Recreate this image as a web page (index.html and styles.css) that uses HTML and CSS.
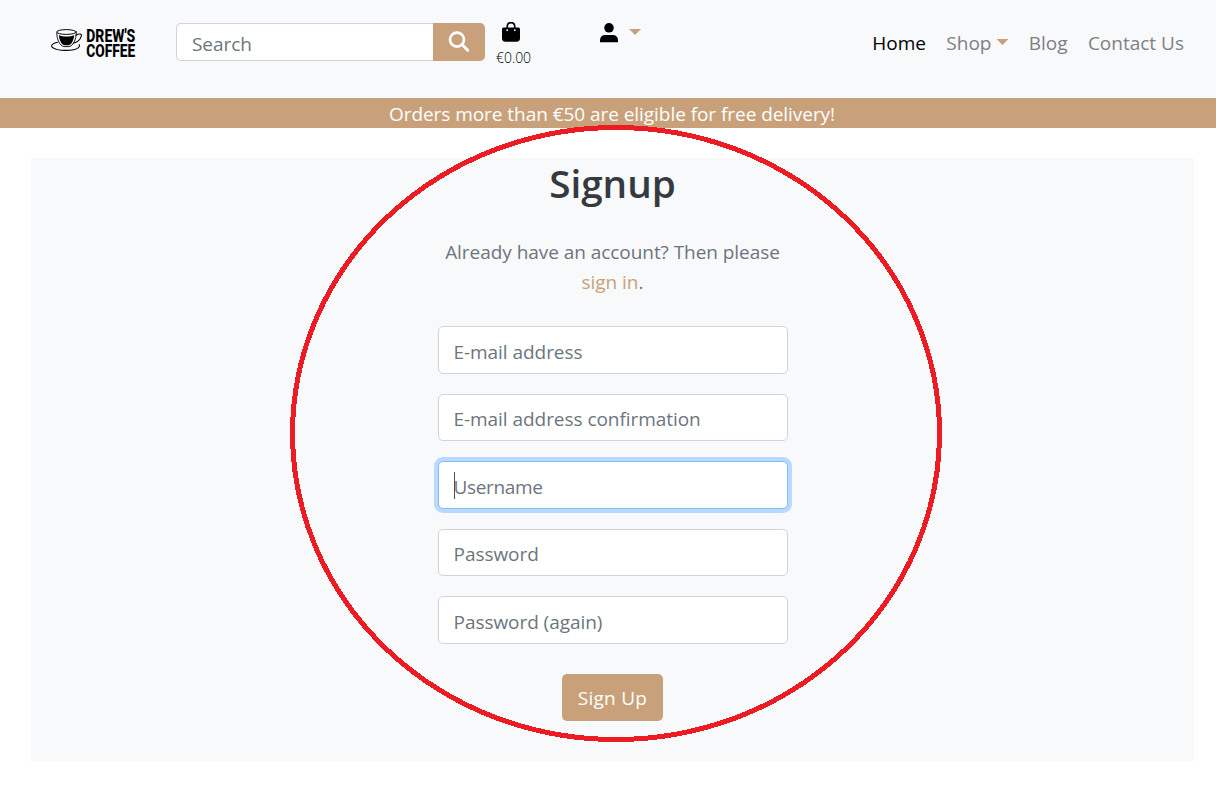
FILE: index.html
```
<!DOCTYPE html>
<html lang="en">
<head>
<meta charset="utf-8">
<title>Drew's Coffee - Signup</title>
<link rel="stylesheet" href="styles.css">
</head>
<body>
<header class="header">
  <a class="brand">
    <svg width="90" height="34" viewBox="0 0 90 34">
      <g fill="none" stroke="#000" stroke-linecap="round">
        <ellipse cx="16.5" cy="6" rx="9.8" ry="2.4" stroke-width="1"/>
        <path d="M6.7 7C7 13.5 9.5 19.7 14 20.6H19C23.5 19.7 26 13.5 26.3 7" stroke-width=".9"/>
        <path d="M26 9.2C28.5 7.8 32.5 7.2 31.2 10.4C30 14.2 26.5 16.6 23.3 17.2" stroke-width="1.1"/>
        <path d="M7.5 16.2C2.5 17.2 0 19.5 2.8 21.7C7 25.2 24 25.4 28.5 21.6C29.7 20.4 29.9 19.5 29.2 18.7" stroke-width="1.1"/>
      </g>
      <path d="M8.8 9.2C12.5 11 20.5 11 24.2 9.2C23.6 14.5 21.5 18.6 18.7 19.2H14.5C11.5 18.6 9.5 14.5 8.8 9.2Z"/>
      <text class="logo-text" x="36.3" y="15.7" textLength="49" lengthAdjust="spacingAndGlyphs">DREW'S</text>
      <text class="logo-text" x="36.3" y="31" textLength="49" lengthAdjust="spacingAndGlyphs">COFFEE</text>
    </svg>
  </a>
  <form class="search">
    <input class="search-input" type="text" placeholder="Search">
    <button class="search-btn" type="button" aria-label="Search">
      <svg width="22" height="22" viewBox="0 0 22 22" fill="none" stroke="#fff" stroke-linecap="round"><circle cx="9" cy="8.6" r="7" stroke-width="2.7"/><path d="M14.2 13.8L19.7 19.3" stroke-width="3"/></svg>
    </button>
  </form>
  <a class="bag">
    <svg width="18" height="20" viewBox="0 0 18 20"><path d="M5.2 8V5C5.2 -.8 12.8 -.8 12.8 5V8" fill="none" stroke="#000" stroke-width="1.6"/><path d="M1.5 5.5H16.5Q18 5.5 18 7V16.3Q18 19.7 14.6 19.7H3.4Q0 19.7 0 16.3V7Q0 5.5 1.5 5.5Z"/><circle cx="5.2" cy="8.2" r=".9" fill="#f8f9fb"/><circle cx="12.8" cy="8.2" r=".9" fill="#f8f9fb"/></svg>
    <span class="price">€0.00</span>
  </a>
  <a class="account">
    <svg width="18" height="20" viewBox="0 0 18 20"><circle cx="9" cy="4.8" r="4.8"/><path d="M0 19.2V17.5Q0 12 5.5 12H12.5Q18 12 18 17.5V19.2Z"/></svg>
    <i class="caret"></i>
  </a>
  <nav class="nav">
    <a class="active">Home</a>
    <a>Shop<i class="caret"></i></a>
    <a>Blog</a>
    <a>Contact Us</a>
  </nav>
</header>
<div class="banner">Orders more than €50 are eligible for free delivery!</div>
<main class="card">
  <h1>Signup</h1>
  <p class="intro">Already have an account? Then please <a>sign in</a>.</p>
  <form class="form">
    <input class="field" type="text" placeholder="E-mail address">
    <input class="field" type="text" placeholder="E-mail address confirmation">
    <div class="focused"><input class="field" type="text" placeholder="Username"><span class="cursor"></span></div>
    <input class="field" type="text" placeholder="Password">
    <input class="field" type="text" placeholder="Password (again)">
    <button class="submit" type="button">Sign Up</button>
  </form>
</main>
<svg class="highlight" width="652" height="617" viewBox="0 0 652 617" shape-rendering="crispEdges"><ellipse cx="326" cy="308.5" rx="323.5" ry="306" fill="none" stroke="#ed1c24" stroke-width="5"/></svg>
</body>
</html>
```
FILE: styles.css
```
* { box-sizing: border-box; }
body {
  margin: 0;
  background: #fff;
  color: #6c757d;
  font: 19px/30px "Open Sans", "Noto Sans", sans-serif;
  letter-spacing: -0.05px;
  overflow: hidden;
}
input, button { font: inherit; letter-spacing: inherit; }
.header {
  display: flex;
  align-items: flex-start;
  height: 98px;
  padding: 22px 32px 0 50px;
  background: #f8f9fb;
}
.brand { width: 90px; margin: 4px 36px 0 0; }
.brand svg { display: block; overflow: visible; }
.logo-text { font: 800 18.7px Roboto, sans-serif; letter-spacing: 0; }
.search { display: flex; width: 309px; height: 38px; margin-top: 1px; }
.search-input {
  flex: 1;
  min-width: 0;
  padding: 3px 15px 0;
  border: 1px solid #ced4da;
  border-right: 0;
  border-radius: 5px 0 0 5px;
  background: #fff;
}
.search-btn {
  display: flex;
  align-items: center;
  justify-content: center;
  width: 52px;
  padding: 0;
  border: 0;
  border-radius: 0 5px 5px 0;
  background: #c8a17a;
}
::placeholder { color: #6c757d; opacity: 1; }
.bag { display: flex; flex-direction: column; width: 36px; margin-left: 10px; }
.bag svg { margin-left: 7px; }
.price { margin: 5px 0 0 1px; color: #000; font-size: 14px; font-weight: 300; line-height: 22px; }
.account { display: flex; gap: 11px; margin: 1px 0 0 69px; }
.account .caret { margin-top: 6px; }
.caret {
  display: block;
  width: 12px;
  height: 6px;
  background: #c8a17a;
  clip-path: polygon(0 0, 100% 0, 50% 100%);
}
.nav { display: flex; gap: 20.3px; margin: 6px 0 0 auto; color: #7f8082; letter-spacing: 0; }
.nav a { display: flex; }
.nav .active { color: #000; }
.nav .caret { margin: 11px 0 0 5px; }
.banner { height: 30px; padding: 1px 0 0 8px; background: #c8a17a; color: #fff; text-align: center; }
.card { width: 1163px; height: 603px; margin: 30px 0 0 31px; background: #f8f9fb; }
h1 { margin: 0; padding-top: 1px; color: #343a40; font-size: 38.7px; font-weight: 600; line-height: 48px; text-align: center; letter-spacing: 0; }
.intro { width: 350px; margin: 30px auto 29px; text-align: center; }
.intro a { color: #c8a17a; }
.form { display: flex; flex-direction: column; gap: 20px; width: 350px; margin: 0 auto; }
.field {
  display: block;
  width: 100%;
  height: 47.5px;
  padding: 4px 15px 0;
  border: 1px solid #ced4da;
  border-radius: 5px;
  background: #fff;
}
.focused { position: relative; }
.focused .field { border-color: #80bdff; box-shadow: 0 0 0 4px #b9dafc; letter-spacing: -0.35px; }
.cursor { position: absolute; left: 16px; top: 11px; width: 1px; height: 27px; background: #495057; }
.submit {
  align-self: center;
  width: 101px;
  height: 47px;
  margin-top: 10px;
  padding: 2px 0 0;
  border: 0;
  border-radius: 5px;
  background: #c8a17a;
  color: #fff;
  letter-spacing: 0.25px;
}
.highlight { position: absolute; left: 290px; top: 125px; pointer-events: none; }
```
